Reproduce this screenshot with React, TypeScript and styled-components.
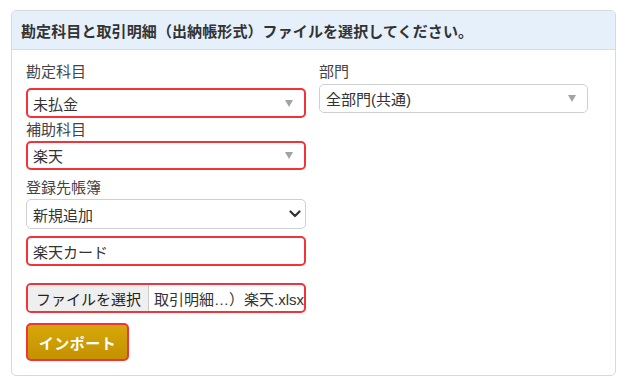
import styled, { createGlobalStyle } from "styled-components";

const GlobalStyle = createGlobalStyle`
    html, body {
        margin: 0;
        padding: 0;
        background: #ffffff;
    }
    body {
        font-family: "Liberation Sans", "Noto Sans CJK JP", sans-serif;
        color: #333333;
    }
`;

const highlight = "#f2343a";

const Page = styled.div`
    padding: 10px 15px 0 11px;
`;

const Panel = styled.div`
    border: 1px solid #d9d9d9;
    border-radius: 5px;
    overflow: hidden;
    background: #ffffff;
`;

const PanelHeading = styled.div`
    height: 38px;
    display: flex;
    align-items: center;
    padding: 0 9px;
    background: #e6f0fb;
    border-bottom: 1px solid #dddddd;
    font-size: 15px;
    font-weight: bold;
    letter-spacing: 0.1px;
    color: #333333;
`;

const PanelBody = styled.div`
    display: grid;
    grid-template-columns: 280px 269px;
    column-gap: 13px;
    padding: 12px 0 14px 14px;
`;

const Column = styled.div`
    display: flex;
    flex-direction: column;
`;

const Label = styled.div<{ $top?: number }>`
    margin-top: ${(p) => p.$top ?? 0}px;
    height: 20px;
    line-height: 20px;
    font-size: 15px;
    color: #444444;
`;

const Field = styled.div<{ $top: number; $height: number; $marked?: boolean; $native?: boolean }>`
    box-sizing: border-box;
    margin-top: ${(p) => p.$top}px;
    height: ${(p) => p.$height}px;
    display: flex;
    align-items: center;
    padding: 0 ${(p) => (p.$native ? 4 : 8)}px 0 ${(p) => (p.$marked ? 5 : 6)}px;
    border: ${(p) => (p.$marked ? `2px solid ${highlight}` : "1px solid #cfcfcf")};
    border-radius: 5px;
    background: #ffffff;
    font-size: 15px;
    color: #333333;
`;

const FieldText = styled.span`
    flex: 1;
    white-space: nowrap;
    overflow: hidden;
`;

const Caret = styled.span`
    width: 0;
    height: 0;
    border-left: 4px solid transparent;
    border-right: 4px solid transparent;
    border-top: 7px solid #a3a3a3;
    margin-right: 3px;
`;

const FileField = styled.div`
    box-sizing: border-box;
    margin-top: 17px;
    height: 30px;
    display: flex;
    align-items: stretch;
    border: 2px solid ${highlight};
    border-radius: 5px;
    overflow: hidden;
    font-size: 15px;
`;

const FileButton = styled.span`
    display: flex;
    align-items: center;
    padding: 0 7px 0 8px;
    background: #efefef;
    border-right: 1px solid #c8c8c8;
    color: #222222;
    white-space: nowrap;
`;

const FileName = styled.span`
    display: flex;
    align-items: center;
    padding-left: 5px;
    white-space: nowrap;
    color: #333333;
`;

const ImportButton = styled.button`
    box-sizing: border-box;
    margin-top: 10px;
    width: 103px;
    height: 38px;
    border: 2px solid ${highlight};
    border-radius: 5px;
    background: linear-gradient(#d6a80a, #c49100);
    color: #ffffff;
    font-family: inherit;
    font-size: 15px;
    font-weight: bold;
    letter-spacing: 0.5px;
    padding: 0;
    cursor: pointer;
`;

function Chevron() {
    return (
        <svg width="12" height="8" viewBox="0 0 12 8">
            <path d="M1.5 1.5 L6 6 L10.5 1.5" fill="none" stroke="#333" strokeWidth="2.2" strokeLinecap="round" strokeLinejoin="round" />
        </svg>
    );
}

export default function App() {
    return (
        <>
            <GlobalStyle />
            <Page>
                <Panel>
                    <PanelHeading>勘定科目と取引明細（出納帳形式）ファイルを選択してください。</PanelHeading>
                    <PanelBody>
                        <Column>
                            <Label>勘定科目</Label>
                            <Field $top={6} $height={30} $marked>
                                <FieldText>未払金</FieldText>
                                <Caret />
                            </Field>
                            <Label $top={2}>補助科目</Label>
                            <Field $top={1} $height={29} $marked>
                                <FieldText>楽天</FieldText>
                                <Caret />
                            </Field>
                            <Label $top={8}>登録先帳簿</Label>
                            <Field $top={1} $height={30} $native>
                                <FieldText>新規追加</FieldText>
                                <Chevron />
                            </Field>
                            <Field $top={7} $height={30} $marked>
                                <FieldText>楽天カード</FieldText>
                            </Field>
                            <FileField>
                                <FileButton>ファイルを選択</FileButton>
                                <FileName>取引明細…）楽天.xlsx</FileName>
                            </FileField>
                            <div>
                                <ImportButton>インポート</ImportButton>
                            </div>
                        </Column>
                        <Column>
                            <Label>部門</Label>
                            <Field $top={2} $height={29}>
                                <FieldText>全部門(共通)</FieldText>
                                <Caret />
                            </Field>
                        </Column>
                    </PanelBody>
                </Panel>
            </Page>
        </>
    );
}
